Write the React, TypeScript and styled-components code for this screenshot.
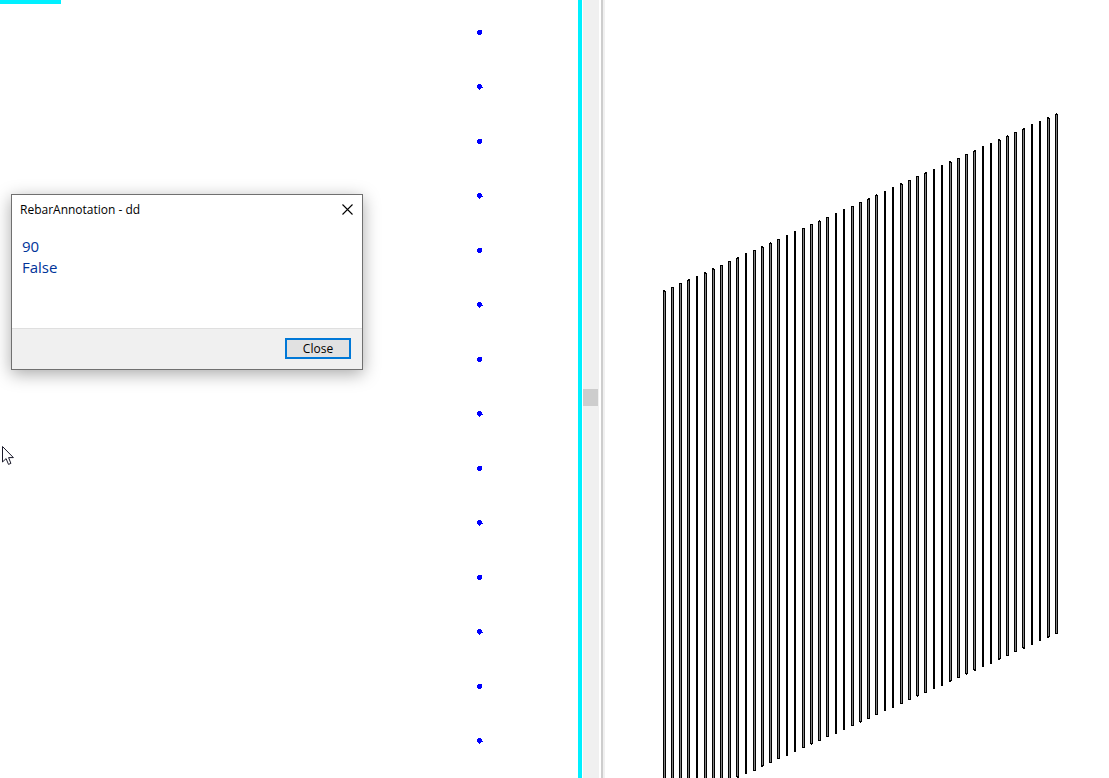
import React from "react";
import styled, { createGlobalStyle } from "styled-components";

const GlobalStyle = createGlobalStyle`
  * { box-sizing: border-box; }
  html, body { margin: 0; height: 100%; background: #fff; overflow: hidden; }
  #root { height: 100%; }
`;

const Workspace = styled.div`
  position: relative;
  display: grid;
  grid-template-columns: 582fr 19px 4px 504fr;
  height: 100vh;
  overflow: hidden;
  font-family: "Open Sans", "Noto Sans", sans-serif;
`;

const SheetView = styled.section`
  display: flex;
  min-width: 0;
  overflow: hidden;
  border-right: 4px solid #00f0ff;
`;

const ScrollTrack = styled.div`
  display: flex;
  flex-direction: column;
  align-items: stretch;
  justify-content: center;
  margin: 0 2px 0 1px;
  padding-top: 17px;
  padding-right: 1px;
  background: #f0f0f0;
`;

const ScrollThumb = styled.div`
  height: 17px;
  background: #cdcdcd;
`;

const Splitter = styled.div`
  background: #f0f0f0;
  border-left: 2px solid #cdcdcd;
`;

const ModelView = styled.section`
  display: flex;
  min-width: 0;
  overflow: hidden;
`;

const Drawing = styled.svg`
  display: block;
  flex: 1;
  width: 100%;
  height: 100%;
`;

const Dialog = styled.div`
  position: absolute;
  left: 11px;
  top: 194px;
  width: 352px;
  display: flex;
  flex-direction: column;
  background: #fff;
  border: 1px solid #707070;
  box-shadow: 0 4px 16px rgba(0, 0, 0, 0.34);
`;

const TitleBar = styled.header`
  display: flex;
  align-items: flex-start;
  justify-content: space-between;
  height: 30px;
  padding: 7px 7px 0 8px;
`;

const Title = styled.h1`
  margin: 0;
  font-size: 12px;
  line-height: 16px;
  font-weight: 400;
  color: #000;
`;

const IconButton = styled.button`
  display: flex;
  align-items: center;
  justify-content: center;
  width: 15px;
  height: 15px;
  padding: 0;
  border: 0;
  background: transparent;
`;

const Message = styled.p`
  margin: 0;
  height: 103px;
  padding: 11px 10px;
  font-size: 15px;
  line-height: 21px;
  color: #003399;
`;

const Footer = styled.footer`
  display: flex;
  align-items: flex-start;
  justify-content: flex-end;
  height: 41px;
  padding: 9px 11px;
  background: #f0f0f0;
  border-top: 1px solid #dfdfdf;
`;

const CloseButton = styled.button`
  width: 66px;
  height: 21px;
  padding: 0;
  border: 2px solid #0078d7;
  background: #e1e1e1;
  color: #000;
  font-family: inherit;
  font-size: 12px;
  line-height: 17px;
`;

const Pointer = styled.svg`
  position: absolute;
  left: 2px;
  top: 446px;
  width: 12px;
  height: 20px;
`;

const DOT_EVEN = "M1 0h4v1h0v3h-1v1h-3v-1h-1v-3h1z";
const DOT_ODD = "M1 0h3v1h1v2h1v1h-2v1h-1v1h-1v-1h-1v-1h-1v-3h1z";

// Corner pixels where a sloped cap steps: l = left two, m = middle, r = right two.
type Step = "l" | "m" | "r";
const TOP_STEPS: Record<number, Step> = {
  0: "l", 3: "r", 5: "l", 6: "l", 9: "r", 12: "l", 13: "m", 19: "m", 25: "r",
  26: "m", 29: "l", 32: "r", 35: "l", 38: "r", 41: "l", 42: "m", 44: "r", 47: "l", 48: "m",
};
const BOTTOM_STEPS: Record<number, Step> = {
  9: "r", 12: "l", 18: "m", 24: "m", 31: "m", 35: "l", 37: "m", 38: "r", 41: "l", 44: "r", 47: "l",
};
const STEP_X: Record<Step, number> = { l: 0, m: 1, r: 1 };
const STEP_W: Record<Step, number> = { l: 2, m: 1, r: 2 };

function Rebar({ index }: { index: number }) {
  const position = 58.45 + 8.17 * index;
  const x = Math.floor(position);
  const hollow = position - x > 0.28;
  const top = Math.round(290.4 - 3.69 * index);
  const bottom = Math.round(634 + 3.69 * (48 - index));
  const topStep = TOP_STEPS[index];
  const bottomStep = BOTTOM_STEPS[index];
  const y1 = top + (topStep ? 1 : 0);
  const y2 = bottom - (bottomStep ? 1 : 0);
  return (
    <g>
      <rect x={x} y={y1} width={hollow ? 3 : 2} height={y2 - y1} fill="#000" />
      {hollow && <rect x={x + 1} y={y1 + 1} width={1} height={y2 - y1 - 2} fill="#808080" />}
      {topStep && <rect x={x + STEP_X[topStep]} y={top} width={STEP_W[topStep]} height={1} />}
      {bottomStep && <rect x={x + STEP_X[bottomStep]} y={y2} width={STEP_W[bottomStep]} height={1} />}
    </g>
  );
}

export default function App() {
  return (
    <>
      <GlobalStyle />
      <Workspace>
        <SheetView aria-label="Sheet view">
          <Drawing shapeRendering="crispEdges" aria-hidden="true">
            <rect width={61} height={4} fill="#00f0ff" />
            {Array.from({ length: 14 }, (_, i) => (
              <path
                key={i}
                d={i % 2 ? DOT_ODD : DOT_EVEN}
                fill="#0000ff"
                transform={`translate(477 ${Math.floor(30 + i * 54.5)})`}
              />
            ))}
          </Drawing>
        </SheetView>
        <ScrollTrack>
          <ScrollThumb />
        </ScrollTrack>
        <Splitter />
        <ModelView aria-label="Model view">
          <Drawing shapeRendering="crispEdges" aria-hidden="true">
            {Array.from({ length: 49 }, (_, i) => (
              <Rebar key={i} index={i} />
            ))}
          </Drawing>
        </ModelView>

        <Dialog role="dialog" aria-labelledby="dialog-title">
          <TitleBar>
            <Title id="dialog-title">RebarAnnotation - dd</Title>
            <IconButton type="button" aria-label="Close window">
              <svg width="11" height="11" viewBox="0 0 11 11" aria-hidden="true">
                <path d="M0.5 0.5l10 10M10.5 0.5l-10 10" stroke="#000" strokeWidth="1.1" fill="none" />
              </svg>
            </IconButton>
          </TitleBar>
          <Message>
            90
            <br />
            False
          </Message>
          <Footer>
            <CloseButton type="button">Close</CloseButton>
          </Footer>
        </Dialog>

        <Pointer viewBox="0 0 12 20" aria-hidden="true">
          <path
            d="M0.5 0.5V16L4.1 12.6L6.5 18.4L8.9 17.4L6.6 11.6H11.4Z"
            fill="#fff"
            stroke="#1a1a2a"
            strokeWidth="1"
          />
        </Pointer>
      </Workspace>
    </>
  );
}
